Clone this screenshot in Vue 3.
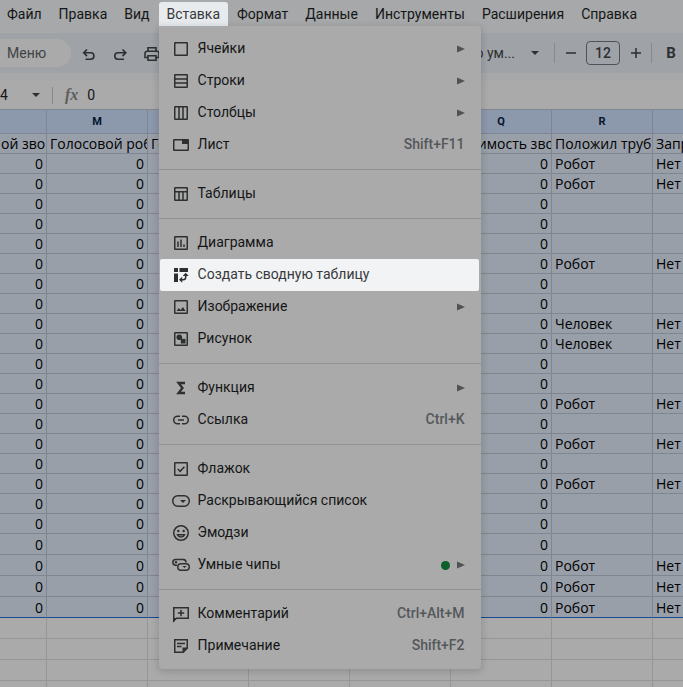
<script setup>
const menus = ['Файл', 'Правка', 'Вид', 'Вставка', 'Формат', 'Данные', 'Инструменты', 'Расширения', 'Справка']

const groups = [
  [
    { icon: 'cell', label: 'Ячейки', sub: true },
    { icon: 'rows', label: 'Строки', sub: true },
    { icon: 'cols', label: 'Столбцы', sub: true },
    { icon: 'sheet', label: 'Лист', key: 'Shift+F11' },
  ],
  [{ icon: 'table', label: 'Таблицы' }],
  [
    { icon: 'chart', label: 'Диаграмма' },
    { icon: 'pivot', label: 'Создать сводную таблицу', active: true },
    { icon: 'image', label: 'Изображение', sub: true },
    { icon: 'drawing', label: 'Рисунок' },
  ],
  [
    { icon: 'sigma', label: 'Функция', sub: true },
    { icon: 'link', label: 'Ссылка', key: 'Ctrl+K' },
  ],
  [
    { icon: 'check', label: 'Флажок' },
    { icon: 'dropdown', label: 'Раскрывающийся список' },
    { icon: 'emoji', label: 'Эмодзи' },
    { icon: 'chips', label: 'Умные чипы', sub: true, dot: true },
  ],
  [
    { icon: 'comment', label: 'Комментарий', key: 'Ctrl+Alt+M' },
    { icon: 'note', label: 'Примечание', key: 'Shift+F2' },
  ],
]

const icons = {
  cell: '<rect x="3.75" y="3.75" width="12.5" height="12.5" rx="0.5"/>',
  rows: '<rect x="3.75" y="3.75" width="12.5" height="12.5" rx="0.5"/><path d="M4 8h12M4 12h12"/>',
  cols: '<rect x="3.75" y="3.75" width="12.5" height="12.5" rx="0.5"/><path d="M8 4v12M12 4v12"/>',
  sheet: '<rect x="2.75" y="4.75" width="14.5" height="10.5" rx="0.5"/><path class="f" d="M11 4.5h6.5V9H11z"/>',
  table: '<rect x="3.75" y="3.75" width="12.5" height="12.5" rx="0.5"/><path d="M4 7.7h12M8 8v8M12 8v8"/>',
  chart: '<rect x="3.75" y="3.75" width="12.5" height="12.5" rx="0.5"/><path d="M7 8.5V14M10 6.5V14M13 11.5V14"/>',
  pivot: '<path class="f" d="M3 3h4v4H3zM8.5 3H17v4H8.5zM3 8.5h4V17H3z"/><path d="M14.7 10v2.2q0 2.5-2.5 2.5H10.5"/><path class="f" d="M14.7 7.8l3 3.2h-6zM8 14.7l3.2-3v6z"/>',
  image: '<rect x="3.75" y="3.75" width="12.5" height="12.5" rx="0.5"/><path class="f" d="M5.5 14l2.3-3 1.7 2 2.5-3L14.5 14z"/>',
  drawing: '<rect x="3.75" y="3.75" width="12.5" height="12.5" rx="0.5"/><circle class="f" cx="8.3" cy="8.3" r="2.8"/><path class="f" d="M9.8 9.8h4.7v4.7H9.8z"/>',
  sigma: '<path d="M14 5H7.5l4 5-4 5H14" style="stroke-width:2.3"/>',
  link: '<path d="M9 6.2H6.5a3.8 3.8 0 0 0 0 7.6H9M11 6.2h2.5a3.8 3.8 0 0 1 0 7.6H11M7 10h6"/>',
  check: '<rect x="3.75" y="3.75" width="12.5" height="12.5" rx="0.5"/><path d="M6.8 10l2.3 2.3 4.3-4.6"/>',
  dropdown: '<rect x="1.75" y="4.75" width="16.5" height="10.5" rx="5"/><path class="f" d="M9 9h6l-3 3z"/>',
  emoji: '<circle cx="10" cy="10" r="7.25"/><circle class="f" cx="7.3" cy="8" r="1.2"/><circle class="f" cx="12.7" cy="8" r="1.2"/><path d="M6.5 11.8a3.8 3.8 0 0 0 7 0z"/>',
  chips: '<path d="M6 10.25H4.7a2.9 2.9 0 0 1 0-5.8h7.6a2.9 2.9 0 0 1 2.7 3"/><rect x="6.75" y="8.75" width="11.5" height="6.5" rx="3.25"/><circle class="f" cx="5" cy="7.3" r="1.2"/><path class="f" d="M11.5 11h4l-2 2z"/>',
  comment: '<path d="M2.75 17V3.75h14.5v10.5H5.5z"/><path class="f" d="M2 14h4l-4 4z"/><path d="M10 5.8v6.4M6.8 9h6.4"/>',
  note: '<path d="M3.75 3.75h12.5v8.5l-4 4H3.75z"/><path class="f" d="M16.5 11.5H11.5v5z"/><path d="M6 7.5h8M6 10.5h4.5"/>',
}

const cols = ['L', 'M', 'N', 'O', 'P', 'Q', 'R', 'S']
const titles = ['ой зво', 'Голосовой робот', 'Го', '', '', 'Стоимость звонка', 'Положил трубку', 'Запрос']
const outcome = { 0: 'Робот', 1: 'Робот', 5: 'Робот', 8: 'Человек', 9: 'Человек', 12: 'Робот', 14: 'Робот', 16: 'Робот', 20: 'Робот', 21: 'Робот', 22: 'Робот' }
const rows = Array.from({ length: 23 }, (_, i) => ({
  tall: i > 18,
  cells: ['0', '0', '', '', '', '0', outcome[i] || '', outcome[i] ? 'Нет' : ''],
}))
</script>

<template>
  <div class="app">
    <nav class="menubar">
      <div v-for="m in menus" :key="m" class="menu-slot">
        <button class="menu-btn" :class="{ open: m === 'Вставка' }">{{ m }}</button>
        <div v-if="m === 'Вставка'" class="dropdown" role="menu">
          <div v-for="(g, gi) in groups" :key="gi" class="group">
            <button v-for="it in g" :key="it.label" class="item" :class="{ active: it.active }" role="menuitem">
              <svg class="icon" viewBox="0 0 20 20" v-html="icons[it.icon]"></svg>
              <span class="label">{{ it.label }}</span>
              <span v-if="it.dot" class="dot"></span>
              <span v-if="it.key" class="key">{{ it.key }}</span>
              <svg v-if="it.sub" class="arrow" viewBox="0 0 8 8"><path d="M0 0.5L8 4L0 7.5z" /></svg>
            </button>
          </div>
        </div>
      </div>
    </nav>

    <div class="toolbar">
      <div class="tools">
        <button class="search">Меню</button>
        <button class="tool" aria-label="Отменить">
          <svg class="glyph" viewBox="0 0 20 20"><path d="M9 6.5L5.7 9.8l3.3 3.3M6.2 9.8h6.5a3.2 3.2 0 0 1 0 6.4H7.5" /></svg>
        </button>
        <button class="tool" aria-label="Повторить">
          <svg class="glyph" viewBox="0 0 20 20"><path d="M12.5 6.5l3.3 3.3-3.3 3.3M15.3 9.8H8a3.2 3.2 0 0 0 0 6.4h6" /></svg>
        </button>
        <button class="tool" aria-label="Печать">
          <svg class="glyph" viewBox="0 0 20 20"><path d="M6 8V4.75h8V8M6 14.5H3V10.25a2 2 0 0 1 2-2h10a2 2 0 0 1 2 2v4.25H14M6 12.75h8v4.5H6z" /></svg>
        </button>
      </div>
      <div class="tools">
        <button class="font">По ум...<svg class="caret" viewBox="0 0 8 4"><path d="M0 0h8L4 4z" /></svg></button>
        <span class="rule gap"></span>
        <button class="step" aria-label="Уменьшить"><svg class="sign" viewBox="0 0 12 12"><path d="M1 6h10" /></svg></button>
        <input class="size" value="12" aria-label="Размер шрифта" />
        <button class="step" aria-label="Увеличить"><svg class="sign" viewBox="0 0 12 12"><path d="M1 6h10M6 1v10" /></svg></button>
        <span class="rule"></span>
        <button class="bold">B</button>
      </div>
    </div>

    <div class="formula">
      <button class="name">4<svg class="caret" viewBox="0 0 8 4"><path d="M0 0h8L4 4z" /></svg></button>
      <span class="rule short"></span>
      <span class="fx">fx</span>
      <input class="value" value="0" aria-label="Формула" />
    </div>

    <div class="sheet">
      <table>
        <colgroup>
          <col class="edge" />
          <col v-for="n in 7" :key="n" class="col" />
        </colgroup>
        <thead>
          <tr><th v-for="c in cols" :key="c"><span v-if="c !== 'L' && c !== 'S'">{{ c }}</span></th></tr>
        </thead>
        <tbody>
          <tr><td v-for="(t, i) in titles" :key="i">{{ t }}</td></tr>
          <tr v-for="(r, i) in rows" :key="i" :class="{ tall: r.tall }">
            <td v-for="(c, j) in r.cells" :key="j" :class="{ num: j < 6 }">{{ c }}</td>
          </tr>
        </tbody>
        <tbody class="empty">
          <tr v-for="n in 4" :key="n" class="tall"><td v-for="j in 8" :key="j"></td></tr>
        </tbody>
      </table>
    </div>
  </div>
</template>

<style>
body {
  margin: 0;
  background: #aaaaaa;
}
</style>

<style scoped>
.app {
  height: 100vh;
  display: flex;
  flex-direction: column;
  overflow: hidden;
  background: #a6a8a9;
  color: #151617;
  font-family: Roboto, "Liberation Sans", sans-serif;
  font-size: 14px;
}
button,
input {
  margin: 0;
  padding: 0;
  border: 0;
  background: none;
  color: inherit;
  font: inherit;
}
svg {
  flex: none;
}
.menubar {
  display: flex;
  flex: none;
  gap: 1px;
  height: 31px;
  margin-left: -1px;
  padding-top: 2px;
  box-sizing: border-box;
  white-space: nowrap;
}
.menu-slot {
  position: relative;
}
.menu-btn {
  display: block;
  height: 24px;
  padding: 0 8px;
  border-radius: 3px 3px 0 0;
  line-height: 24px;
}
.menu-btn.open {
  background: #e8ebee;
  color: #37393c;
}
.dropdown {
  position: absolute;
  z-index: 2;
  top: 24px;
  left: 0;
  width: 322px;
  box-sizing: border-box;
  padding: 7px 0;
  border-radius: 0 4px 4px 4px;
  background: #aaaaaa;
  box-shadow: 0 2px 6px 2px rgba(0, 0, 0, 0.12);
}
.group + .group {
  margin-top: 8px;
  padding-top: 8px;
  border-top: 1px solid #919292;
}
.item {
  display: flex;
  align-items: center;
  width: 319px;
  height: 32px;
  margin-left: 1px;
  padding: 0 14px 0 11px;
  border-radius: 2px;
  text-align: left;
}
.item.active {
  background: #f1f3f4;
  color: #37393c;
}
.icon {
  width: 20px;
  height: 20px;
  margin-right: 7px;
  fill: none;
  stroke: #2d2f30;
  stroke-width: 1.5;
}
.icon :deep(.f) {
  fill: #2d2f30;
  stroke: none;
}
.label {
  flex: 1;
  padding-bottom: 2px;
}
.key {
  padding-bottom: 2px;
  color: #55585b;
  font-weight: 500;
}
.arrow {
  width: 8px;
  height: 8px;
  fill: #505354;
}
.dot {
  width: 9px;
  height: 9px;
  margin-right: 7px;
  border-radius: 50%;
  background: #0c6029;
}
.toolbar {
  display: flex;
  flex: none;
  justify-content: space-between;
  height: 40px;
  margin-top: 2px;
  overflow: hidden;
  background: #9fa3a8;
  color: #2d2f30;
}
.tools {
  display: flex;
  align-items: center;
}
.search {
  height: 28px;
  width: 71px;
  padding-left: 7px;
  border-radius: 0 14px 14px 0;
  background: #aaaaaa;
  color: #404345;
  text-align: left;
}
.tool {
  width: 20px;
  height: 20px;
  margin-left: 7px;
}
.tool + .tool {
  margin-left: 12px;
}
.glyph {
  display: block;
  width: 20px;
  height: 20px;
  fill: none;
  stroke: #2d2f30;
  stroke-width: 1.6;
}
.font {
  display: flex;
  align-items: center;
  gap: 16px;
}
.caret {
  width: 8px;
  height: 4px;
  fill: #2d2f30;
}
.rule {
  width: 1px;
  height: 20px;
  background: #858a8f;
}
.gap {
  margin-left: 15px;
}
.step {
  display: grid;
  place-items: center;
  width: 31px;
  height: 24px;
}
.sign {
  width: 12px;
  height: 12px;
  fill: none;
  stroke: #2d2f30;
  stroke-width: 1.5;
}
.size {
  width: 34px;
  height: 24px;
  box-sizing: border-box;
  border: 1px solid #505356;
  border-radius: 4px;
  text-align: center;
  font-weight: 500;
}
.bold {
  width: 31px;
  padding-left: 7px;
  font-size: 15px;
  font-weight: 700;
}
.formula {
  display: flex;
  flex: none;
  align-items: center;
  height: 28px;
  margin-top: 8px;
  background: #aaaaaa;
}
.name {
  display: flex;
  align-items: center;
  justify-content: space-between;
  width: 40px;
}
.short {
  height: 17px;
  margin-left: 12px;
}
.fx {
  margin-left: 12px;
  color: #5c5e60;
  font: italic 700 16px "Liberation Serif", serif;
}
.value {
  flex: 1;
  margin-left: 9px;
  min-width: 0;
}
.sheet {
  flex: 1;
  overflow: hidden;
  background: #aaaaaa;
}
table {
  table-layout: fixed;
  width: 754px;
  border-collapse: separate;
  border-spacing: 0;
  border-top: 1px solid #80878f;
}
.edge {
  width: 47px;
}
.col {
  width: 101px;
}
th,
td {
  box-sizing: border-box;
  padding: 0 3px;
  border-right: 1px solid #80868f;
  border-bottom: 1px solid #80868f;
  overflow: hidden;
  white-space: nowrap;
}
th {
  height: 24px;
  background: #8c98ab;
  color: #04142e;
  font-size: 11px;
  font-weight: 700;
}
td {
  height: 20px;
  background: #999fa9;
  color: #000000;
  font-family: "Open Sans", "Noto Sans", sans-serif;
  font-size: 14px;
  line-height: 19px;
  vertical-align: bottom;
}
td:first-child {
  padding-left: 1px;
}
.tall td {
  height: 21px;
}
.num {
  text-align: right;
}
tbody:nth-of-type(1) tr:last-child td {
  border-bottom-color: #174a90;
}
.empty td {
  background: #aaaaaa;
  border-color: #969696;
}
</style>
